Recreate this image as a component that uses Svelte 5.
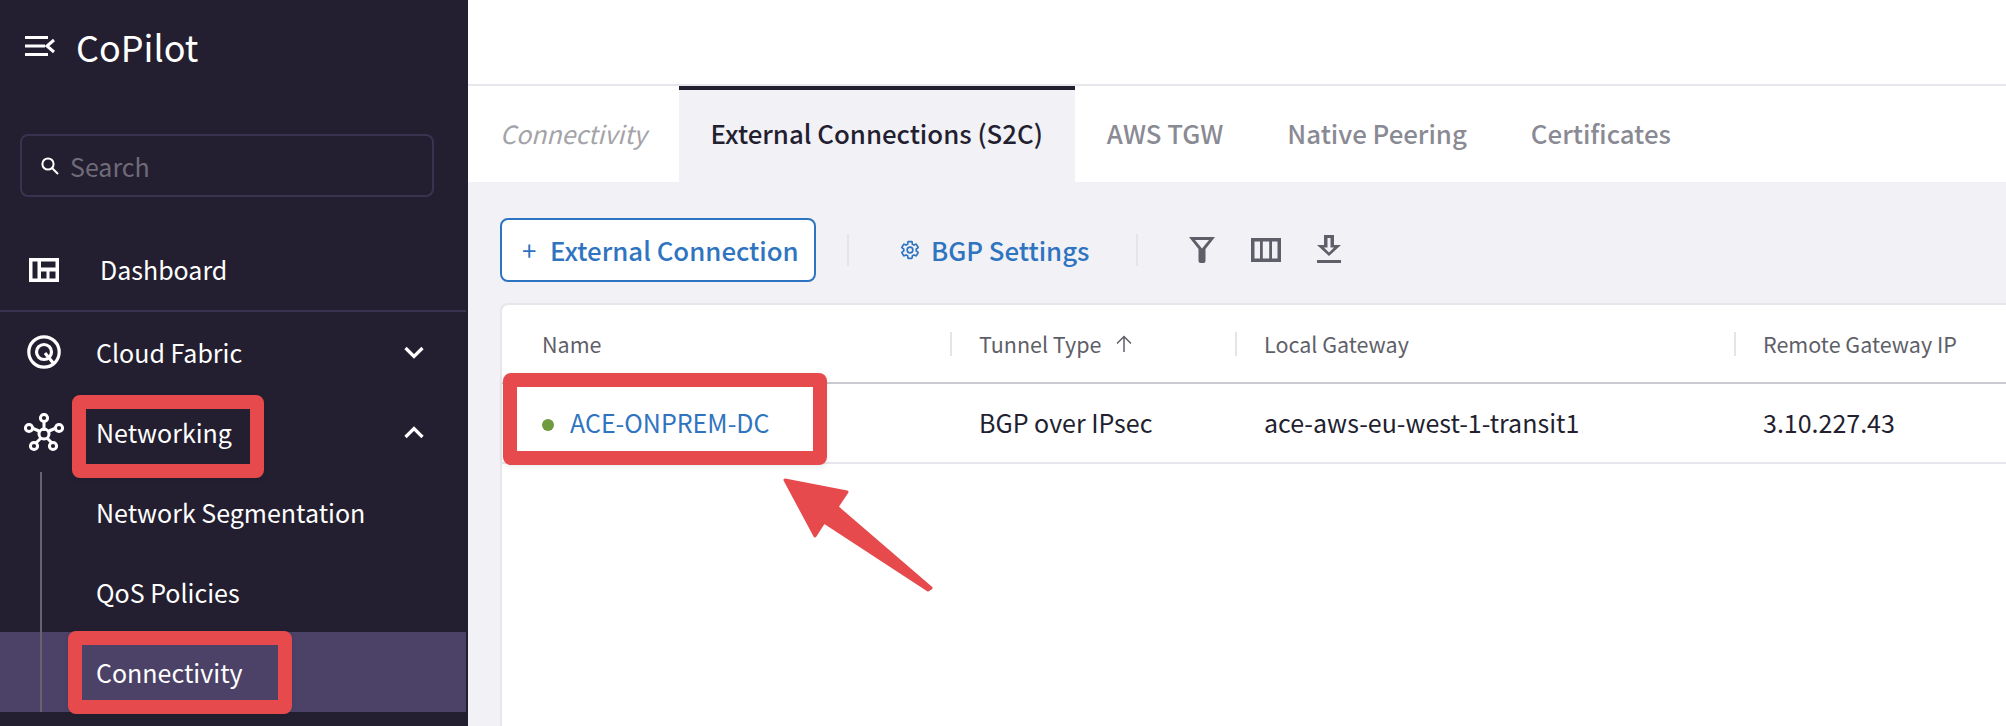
<script>
  // Static capture of the site-to-cloud page with red callouts on top.
  const tabs = ['External Connections (S2C)', 'AWS TGW', 'Native Peering', 'Certificates'];
  const subNav = ['Network Segmentation', 'QoS Policies', 'Connectivity'];
  const callouts = [
    { x: 72, y: 395, w: 192, h: 83 },
    { x: 68, y: 631, w: 224, h: 83 },
    { x: 503, y: 373, w: 324, h: 92 },
  ];
  const gear = 'M19.43 12.98c.04-.32.07-.64.07-.98 0-.34-.03-.66-.07-.98l2.11-1.65c.19-.15.24-.42.12-.64l-2-3.46c-.12-.22-.39-.3-.61-.22l-2.49 1c-.52-.4-1.08-.73-1.69-.98l-.38-2.65C14.46 2.18 14.25 2 14 2h-4c-.25 0-.46.18-.49.42l-.38 2.65c-.61.25-1.17.59-1.69.98l-2.49-1c-.23-.09-.49 0-.61.22l-2 3.46c-.13.22-.07.49.12.64l2.11 1.65c-.04.32-.07.65-.07.98 0 .33.03.66.07.98l-2.11 1.65c-.19.15-.24.42-.12.64l2 3.46c.12.22.39.3.61.22l2.49-1c.52.4 1.08.73 1.69.98l.38 2.65c.03.24.24.42.49.42h4c.25 0 .46-.18.49-.42l.38-2.65c.61-.25 1.17-.59 1.69-.98l2.49 1c.23.09.49 0 .61-.22l2-3.46c.12-.22.07-.49-.12-.64l-2.11-1.65z';
</script>

<div class="page">
  <aside class="side">
    <div class="brand">
      <svg class="burger" width="30" height="20" viewBox="0 0 30 20" fill="none" stroke="#fff" stroke-width="3">
        <path d="M0 1.500h23M0 10h20M0 18.500h23M29 4l-7 6 7 6" />
      </svg>
      <span>CoPilot</span>
    </div>

    <div class="search">
      <svg width="18" height="18" viewBox="0 0 18 18" fill="none" stroke="#fff" stroke-width="2">
        <circle cx="7" cy="7" r="5.600" /><path d="M11 11l6 6" />
      </svg>
      <span>Search</span>
    </div>

    <nav>
      <div class="item dash">
        <svg class="ico" width="30" height="24" viewBox="0 0 30 24" fill="#fff">
          <path fill-rule="evenodd" d="M0 0h30v24H0zM3.500 3.500v17h5v-17zM12 3.500v6h14.500v-6zM12 13.500v7h5.500v-7zM20.500 13.500v7h6v-7z" />
        </svg>
        <span>Dashboard</span>
      </div>
      <div class="item group">
        <svg class="ico" width="36" height="36" viewBox="0 0 36 36" fill="none" stroke="#fff" stroke-width="3.200">
          <circle cx="18" cy="18" r="15.200" /><circle cx="18" cy="18" r="7.500" /><path d="M19 19l9 11" />
        </svg>
        <span class="label">Cloud Fabric</span>
        <svg class="chev" width="20" height="13" viewBox="0 0 20 13" fill="none" stroke="#fff" stroke-width="3.200"><path d="M1.500 2l8.500 8.500L18.500 2" /></svg>
      </div>
      <div class="item group">
        <svg class="ico" width="42" height="40" viewBox="0 0 42 40" fill="none" stroke="#fff" stroke-width="3">
          <path d="M21 8v10M9 15l7 3M33 15l-7 3M13 30l5-5M29 30l-5-5" />
          <circle cx="21" cy="21" r="5" /><circle cx="21" cy="5" r="3.600" /><circle cx="6" cy="15" r="3.600" /><circle cx="36" cy="15" r="3.600" /><circle cx="11" cy="33" r="3.600" /><circle cx="30" cy="33" r="3.600" />
        </svg>
        <span class="label">Networking</span>
        <svg class="chev" width="20" height="13" viewBox="0 0 20 13" fill="none" stroke="#fff" stroke-width="3.200"><path d="M1.500 11L10 2.500l8.500 8.500" /></svg>
      </div>
      <div class="subs">
        {#each subNav as name}
          <div class="sub" class:active={name === 'Connectivity'}>{name}</div>
        {/each}
      </div>
    </nav>
  </aside>

  <main>
    <div class="topbar"></div>
    <div class="tabs">
      <div class="tab crumb">Connectivity</div>
      {#each tabs as t, i}
        <div class="tab" class:on={i === 0}>{t}</div>
      {/each}
    </div>

    <div class="content">
      <div class="toolbar">
        <button class="add"><span class="plus">+</span>External Connection</button>
        <i class="sep first"></i>
        <button class="bgp">
          <svg width="20" height="20" viewBox="0 0 24 24" fill="none" stroke="#2f74c0" stroke-width="2"><path d={gear} /><circle cx="12" cy="12" r="3.400" /></svg>
          BGP Settings
        </button>
        <i class="sep second"></i>
        <div class="tools">
          <svg width="26" height="26" viewBox="0 0 26 26" fill="#5f5f69"><path fill-rule="evenodd" d="M0 0h26l-9.500 12V24q0 2-2 2h-3q-2 0-2-2V12zM6 3l7 8.500L20 3z" /></svg>
          <svg width="30" height="24" viewBox="0 0 30 24" fill="#5f5f69"><path fill-rule="evenodd" d="M0 0h30v24H0zM3.500 3.500v17h5.500v-17zM11.800 3.500v17h6.400v-17zM21 3.500v17h5.500v-17z" /></svg>
          <svg class="dl" width="24" height="28" viewBox="0 0 24 28" fill="#5f5f69"><path fill-rule="evenodd" d="M7 0h10v10h7L12 21 0 10h7zM10.500 3v9.500H7l5 5 5-5h-3.500V3zM0 25h24v3H0z" /></svg>
        </div>
      </div>

      <div class="table">
        <div class="row head">
          <div>Name</div>
          <div class="cell">Tunnel Type
            <svg class="sort" width="16" height="17" viewBox="0 0 16 17" fill="none" stroke="#5f5f69" stroke-width="1.500"><path d="M8 17V1.500M1 8.500l7-7 7 7" /></svg>
          </div>
          <div class="cell">Local Gateway</div>
          <div class="cell">Remote Gateway IP</div>
        </div>
        <div class="row body">
          <div class="name"><i class="dot"></i><span>ACE-ONPREM-DC</span></div>
          <div>BGP over IPsec</div>
          <div>ace-aws-eu-west-1-transit1</div>
          <div>3.10.227.43</div>
        </div>
      </div>
    </div>
  </main>

  {#each callouts as c}
    <div class="callout" style:left="{c.x}px" style:top="{c.y}px" style:width="{c.w}px" style:height="{c.h}px"></div>
  {/each}
  <svg class="arrow" width="2006" height="726" viewBox="0 0 2006 726">
    <path d="M785 480L847 492 837 507 931 588 928 590 824 522 815 536z" fill="#e64a4d" stroke="#e64a4d" stroke-width="3" stroke-linejoin="round" />
  </svg>
</div>

<style>
  :global(body){margin:0;background:#fff}
  .page{position:relative;display:flex;width:2006px;height:726px;overflow:hidden;
    font-family:"Noto Sans CJK JP","Noto Sans",sans-serif}

  .side{width:468px;flex:none;background:#231f30;color:#fff}
  .brand{display:flex;align-items:center;gap:21px;height:92px;padding-left:25px;font-size:36px}
  .search{display:flex;align-items:center;gap:11px;box-sizing:border-box;width:414px;height:63px;margin:42px 0 33px 20px;
    padding-left:19px;border:2px solid #3a3350;border-radius:8px;color:#6f6b79;font-size:25px}

  nav{width:466px}
  .item{display:flex;align-items:center;height:80px;font-size:25px;position:relative}
  .item .ico{position:absolute}
  .dash{height:78px;padding-bottom:2px;border-bottom:2px solid #3a3350;padding-left:100px}
  .dash .ico{left:29px;top:28px}
  .group{padding-left:96px}
  .group:nth-child(2) .ico{left:26px;top:22px}
  .group:nth-child(3) .ico{left:23px;top:21px}
  .label{flex:1}
  .chev{margin-right:42px}
  .subs{position:relative}
  .subs::before{content:"";position:absolute;left:40px;top:0;bottom:0;width:2px;background:#66636f;z-index:1}
  .sub{height:80px;line-height:80px;padding-left:96px;font-size:25px}
  .sub.active{background:#4c4268}

  main{flex:1;min-width:0;display:flex;flex-direction:column}
  .topbar{flex:none;height:84px;border-bottom:2px solid #e6e6ec}
  .tabs{flex:none;display:flex;height:96px}
  .tab{padding:0 32px;line-height:94px;font-size:25.800px;font-weight:500;color:#8a8a94;white-space:nowrap}
  .tab.crumb{font-size:25px;font-style:italic;font-weight:400;color:#a3a3a8}
  .tab.on{background:#f1f1f6;color:#231f30;border-top:4px solid #231f30;line-height:86px;height:92px}

  .content{flex:1;min-height:0;background:#f1f1f6;padding:36px 0 0 32px}
  .toolbar{display:flex;align-items:center;height:64px;margin-bottom:21px}
  button{font:inherit;font-size:25.800px;font-weight:500;color:#2f74c0;background:none;border:0;padding:0 0 2px;display:flex;align-items:center}
  button svg{margin-top:2px}
  .add{box-sizing:border-box;width:316px;height:64px;background:#fff;border:2px solid #2f74c0;border-radius:8px;padding-left:20px}
  .plus{font-weight:400;width:28px;text-align:left}
  .sep{width:2px;height:32px;background:#e4e4ea}
  .sep.first{margin:0 51px 0 31px}
  .bgp{gap:11px}
  .sep.second{margin:0 51px 0 46px}
  .tools{display:flex;align-items:center;gap:36px}
  .dl{margin-top:-2px}

  .table{background:#fff;border:2px solid #e6e6ec;border-right:0;border-radius:8px 0 0 0;height:600px}
  .row{display:grid;grid-template-columns:448px 285px 499px 1fr;align-items:center}
  .head{height:77px;border-bottom:2px solid #c9c9d1;font-size:21.500px;color:#5f5f69}
  .head>div:first-child{padding-left:40px}
  .cell{border-left:2px solid #e4e4ea;height:24px;line-height:24px;padding-left:27px;display:flex;align-items:center;white-space:nowrap}
  .sort{margin-left:15px}
  .body{height:76px;padding-bottom:2px;border-bottom:2px solid #e6e6ec;font-size:25px;color:#231f30}
  .body>div{padding-left:29px}
  .body>div.name{padding-left:40px;display:flex;align-items:center;color:#2f74c0}
  .dot{width:12px;height:12px;border-radius:50%;background:#6f9a3e;margin:6px 16px 0 0}

  .callout{position:absolute;box-sizing:border-box;border:14px solid #e64a4d;border-radius:8px;box-shadow:0 2px 6px rgba(0,0,0,.08)}
  .arrow{position:absolute;left:0;top:0;pointer-events:none}
</style>
